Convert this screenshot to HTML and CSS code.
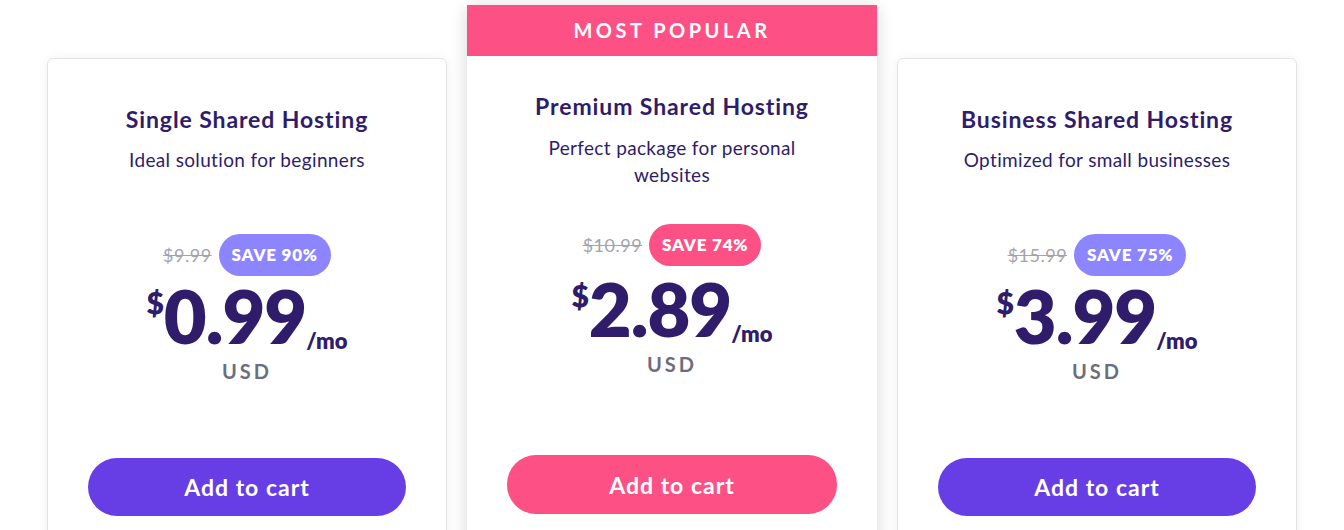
FILE: index.html
```
<!DOCTYPE html>
<html lang="en">
<head>
  <meta charset="UTF-8" />
  <meta name="viewport" content="width=device-width, initial-scale=1.0" />
  <title>Shared Hosting Plans</title>
  <link rel="stylesheet" href="styles.css">
</head>
<body>
  <div class="plans">
    <div class="plan">
      <h3>Single Shared Hosting</h3>
      <p class="desc">Ideal solution for beginners</p>
      <div class="deal">
        <span class="old">$9.99</span>
        <span class="save">SAVE 90%</span>
      </div>
      <div class="price">
        <span class="cur">$</span><span class="amount">0.99</span><span class="per">/mo</span>
      </div>
      <div class="usd">USD</div>
      <button class="cart">Add to cart</button>
    </div>

    <div class="plan popular">
      <div class="ribbon">MOST POPULAR</div>
      <h3>Premium Shared Hosting</h3>
      <p class="desc">Perfect package for personal websites</p>
      <div class="deal">
        <span class="old">$10.99</span>
        <span class="save">SAVE 74%</span>
      </div>
      <div class="price">
        <span class="cur">$</span><span class="amount">2.89</span><span class="per">/mo</span>
      </div>
      <div class="usd">USD</div>
      <button class="cart">Add to cart</button>
    </div>

    <div class="plan">
      <h3>Business Shared Hosting</h3>
      <p class="desc">Optimized for small businesses</p>
      <div class="deal">
        <span class="old">$15.99</span>
        <span class="save">SAVE 75%</span>
      </div>
      <div class="price">
        <span class="cur">$</span><span class="amount">3.99</span><span class="per">/mo</span>
      </div>
      <div class="usd">USD</div>
      <button class="cart">Add to cart</button>
    </div>
  </div>
</body>
</html>
```

FILE: styles.css
```
body {
  margin: 0;
  font-family: Lato, "Open Sans", sans-serif;
  background-color: #fff;
  color: #2f1c6a;
  overflow: hidden;
  height: 530px;
}
.plans {
  display: flex;
  align-items: flex-start;
  gap: 20px;
  padding: 5px 0 0 47px;
}
.plan {
  box-sizing: border-box;
  width: 400px;
  height: 520px;
  margin-top: 53px;
  padding: 45px 40px 0;
  display: flex;
  flex-direction: column;
  align-items: center;
  text-align: center;
  background-color: #fff;
  border: 1px solid #e3e3e3;
  border-radius: 6px;
  box-shadow: 0 0 12px rgba(0, 0, 0, 0.06);
}
h3 {
  margin: 0;
  font-size: 23px;
  line-height: 30px;
  font-weight: 700;
  letter-spacing: 0.9px;
}
.desc {
  margin: 12px 0 0;
  font-size: 19px;
  line-height: 27px;
  letter-spacing: 0.35px;
}
.deal {
  margin-top: 61px;
  display: flex;
  align-items: center;
  gap: 7px;
}
.old {
  font-size: 18px;
  letter-spacing: 0.5px;
  color: #a3a3ad;
  text-decoration: line-through;
}
.save {
  height: 42px;
  line-height: 42px;
  padding: 0 13px;
  border-radius: 21px;
  background-color: #8c85ff;
  color: #fff;
  font-size: 17px;
  font-weight: 800;
  letter-spacing: 0.8px;
}
.price {
  margin-top: 4px;
  display: flex;
  align-items: flex-start;
  justify-content: center;
  font-weight: 800;
}
.cur {
  margin-top: 7px;
  font-size: 30px;
  line-height: 30px;
}
.amount {
  font-size: 74px;
  line-height: 72px;
  letter-spacing: -1px;
}
.per {
  align-self: flex-end;
  font-size: 22px;
  line-height: 22px;
}
.usd {
  margin-top: 7px;
  font-size: 20px;
  line-height: 24px;
  font-weight: 700;
  letter-spacing: 3px;
  color: #6d6d80;
}
.cart {
  margin-top: 75px;
  width: 100%;
  height: 58px;
  border: none;
  border-radius: 29px;
  background-color: #673de6;
  color: #fff;
  font-family: inherit;
  font-size: 23px;
  font-weight: 700;
  letter-spacing: 1px;
  cursor: pointer;
}
.popular {
  width: 410px;
  height: 570px;
  margin-top: 0;
  padding-top: 0;
  border: none;
  border-radius: 0;
  box-shadow: 0 2px 16px rgba(0, 0, 0, 0.16);
}
.ribbon {
  align-self: stretch;
  margin: 0 -40px 35px;
  height: 51px;
  line-height: 51px;
  background-color: #fd5185;
  color: #fff;
  font-size: 20px;
  font-weight: 700;
  letter-spacing: 3.5px;
}
.popular .desc {
  margin-top: 13px;
  padding: 0 20px;
}
.popular .deal {
  margin-top: 36px;
}
.popular .save {
  background-color: #fd5185;
}
.popular .price {
  margin-top: 7px;
}
.popular .cart {
  margin-top: 79px;
  height: 59px;
  background-color: #fd5185;
}
```
